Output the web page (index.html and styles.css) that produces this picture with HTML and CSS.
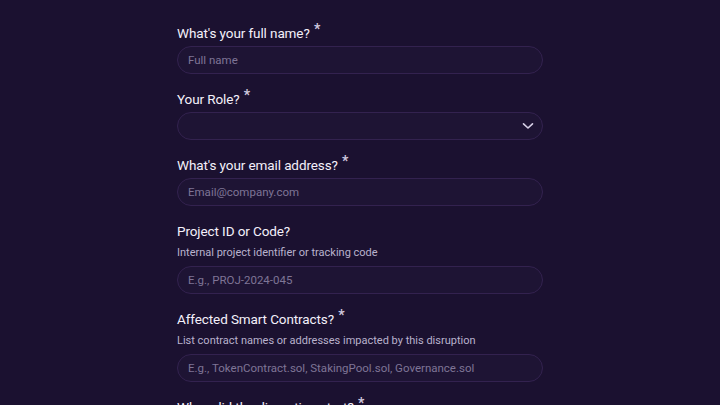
FILE: index.html
```html
<!DOCTYPE html>
<html lang="en">
<head>
<meta charset="utf-8">
<title>Form</title>
<link rel="stylesheet" href="styles.css">
</head>
<body>
<form class="form">
  <div class="field">
    <label class="label">What's your full name? <span class="req">*</span></label>
    <div class="input"><span class="ph">Full name</span></div>
  </div>
  <div class="field">
    <label class="label">Your Role? <span class="req">*</span></label>
    <div class="input select">
      <span class="ph"></span>
      <svg class="chev" width="12" height="8" viewBox="0 0 12 8" aria-hidden="true"><path d="M1.5 1.8 L6 6 L10.5 1.8" fill="none" stroke="#d6cfe6" stroke-width="1.6" stroke-linecap="round" stroke-linejoin="round"/></svg>
    </div>
  </div>
  <div class="field">
    <label class="label">What's your email address? <span class="req">*</span></label>
    <div class="input"><span class="ph">Email@company.com</span></div>
  </div>
  <div class="field">
    <label class="label">Project ID or Code?</label>
    <p class="desc">Internal project identifier or tracking code</p>
    <div class="input"><span class="ph">E.g., PROJ-2024-045</span></div>
  </div>
  <div class="field">
    <label class="label">Affected Smart Contracts? <span class="req">*</span></label>
    <p class="desc">List contract names or addresses impacted by this disruption</p>
    <div class="input"><span class="ph">E.g., TokenContract.sol, StakingPool.sol, Governance.sol</span></div>
  </div>
  <div class="field">
    <label class="label">When did the disruption start? <span class="req">*</span></label>
    <div class="input"><span class="ph"></span></div>
  </div>
</form>
</body>
</html>
```

FILE: styles.css
```css
html, body {
  margin: 0;
  padding: 0;
  background: #1b1130;
  height: 100%;
  overflow: hidden;
}
body {
  font-family: "Roboto", "Noto Sans", sans-serif;
  color: #f1eef8;
}
.form {
  width: 366px;
  margin: 0 auto;
  padding-top: 24px;
  display: flex;
  flex-direction: column;
  gap: 16px;
}
.field {
  display: flex;
  flex-direction: column;
}
.label {
  font-size: 13.5px;
  line-height: 18px;
  font-weight: 400;
  color: #f3f0fa;
  margin-bottom: 4px;
  letter-spacing: -0.1px;
}
.req {
  font-size: 14px;
  font-weight: 700;
  vertical-align: 4px;
  line-height: 0;
  color: #cfc8de;
  margin-left: 1px;
}
.desc {
  margin: 1px 0 5px 0;
  font-size: 11px;
  line-height: 16px;
  color: #b9b1cd;
  letter-spacing: 0;
}
.input {
  box-sizing: border-box;
  height: 28px;
  border: 1px solid #33224f;
  border-radius: 14px;
  background: #1e1434;
  display: flex;
  align-items: center;
  justify-content: space-between;
  padding: 0 8px 0 10px;
}
.ph {
  font-size: 11.5px;
  color: #7e7596;
  letter-spacing: 0;
}
.chev {
  display: block;
}
```
